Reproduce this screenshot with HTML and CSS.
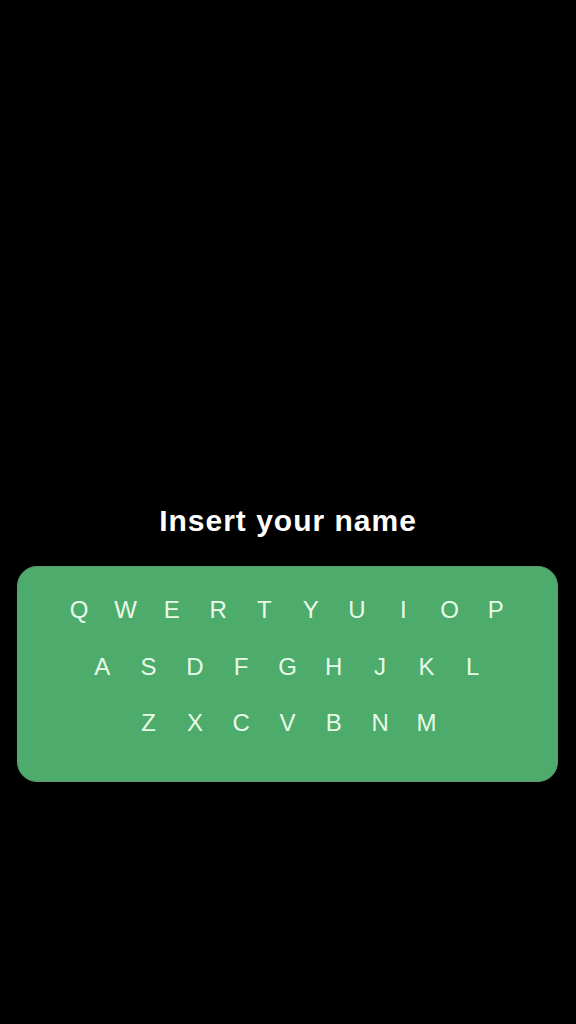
FILE: index.html
```html
<!DOCTYPE html>
<html lang="en">
<head>
    <meta charset="UTF-8">
    <meta name="viewport" content="width=device-width, initial-scale=1.0">
    <title>Insert your name</title>
    <link rel="stylesheet" href="styles.css">
</head>
<body>
    <div class="screen">
        <h1 class="title">Insert your name</h1>

        <div class="keyboard">
            <div class="key-row">
                <span class="key">Q</span><span class="key">W</span><span class="key">E</span><span class="key">R</span><span class="key">T</span><span class="key">Y</span><span class="key">U</span><span class="key">I</span><span class="key">O</span><span class="key">P</span>
            </div>
            <div class="key-row">
                <span class="key">A</span><span class="key">S</span><span class="key">D</span><span class="key">F</span><span class="key">G</span><span class="key">H</span><span class="key">J</span><span class="key">K</span><span class="key">L</span>
            </div>
            <div class="key-row">
                <span class="key">Z</span><span class="key">X</span><span class="key">C</span><span class="key">V</span><span class="key">B</span><span class="key">N</span><span class="key">M</span>
            </div>
        </div>
    </div>
</body>
</html>
```

FILE: styles.css
```css
/* tela preta com teclado verde */
body {
    margin: 0;
    background: #000;
    font-family: "Liberation Sans", Arial, sans-serif;
}

.screen {
    height: 1024px;
    padding-top: 503px;
    box-sizing: border-box;
}

.title {
    margin: 0;
    text-align: center;
    color: #fff;
    font-size: 30px;
    line-height: 36px;
    font-weight: bold;
    letter-spacing: 1px;
}

.keyboard {
    margin: 27px 18px 0 17px;
    height: 216px;
    box-sizing: border-box;
    padding-top: 15px;
    background: #4dab6b;
    border: 1px solid #5f9a70;
    border-radius: 20px;
}

.key-row {
    display: flex;
    justify-content: center;
    height: 56.5px;
    align-items: center;
}

.key {
    width: 46.3px;
    text-align: center;
    color: #e8fbe8;
    font-size: 24px;
    line-height: 28px;
}
```
